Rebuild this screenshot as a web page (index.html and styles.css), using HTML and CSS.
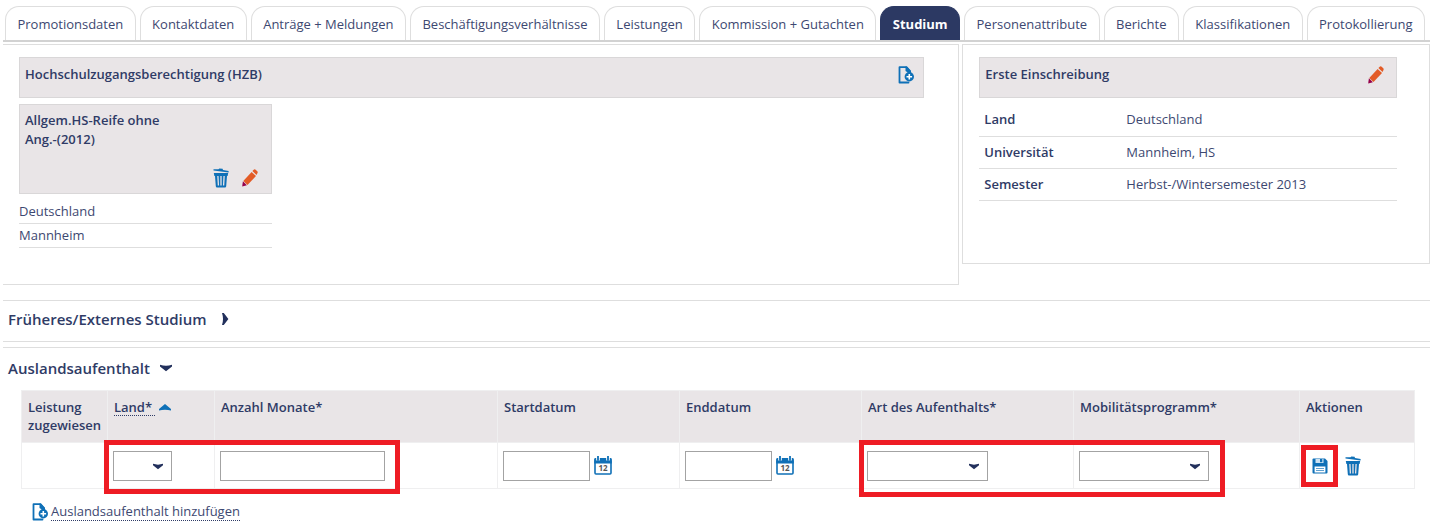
FILE: index.html
```html
<!DOCTYPE html>
<html lang="de">
<head>
  <meta charset="UTF-8" />
  <title>Studium - Promotionsdaten</title>
  <link rel="stylesheet" href="styles.css">
</head>
<body>
  <svg class="sprite" aria-hidden="true">
    <symbol id="i-add" viewBox="0 0 16 18">
      <path d="M12 5.500 8.500 1.200H1.500V16.500H10.500" fill="none" stroke="#0f70b7" stroke-width="1.800" stroke-linejoin="round" stroke-linecap="round"/>
      <path d="M7.500 .5H9l4 4.300V7h-2.500L7.500 5z" fill="#0f70b7"/>
      <circle cx="11.300" cy="10.800" r="4.700" fill="#0f70b7"/>
      <path d="M11.300 8v5.600M8.500 10.800h5.600" stroke="#fff" stroke-width="1.600"/>
    </symbol>
    <symbol id="i-trash" viewBox="0 0 16 20">
      <path d="M.5 1.200 5.500 1.300 6.300.4 9.600.8 10 1.900 15.600 3.100V4.500L.5 2.600z" fill="#0f70b7"/>
      <path d="M.8 5H15.200L14.600 8H14L13.200 18.200Q13.100 19.500 12 19.500H4Q2.900 19.500 2.800 18.200L2 8H1.400z" fill="#0f70b7"/>
      <path d="M4.900 8l.5 9.500M8 8v9.500M11.100 8l-.5 9.500" stroke="#e9e5e7" stroke-width="1.300"/>
    </symbol>
    <symbol id="i-edit" viewBox="0 0 16 18">
      <path d="M1.300 12 9.600 2.900 14 7 5.500 16z" fill="#e35b26"/>
      <path d="M10.400 2 12 .6Q12.800 0 13.700.8L15.500 2.600Q16 3.300 15.400 4.200L14.500 5.900z" fill="#e35b26"/>
      <path d="M.9 12.300 4.900 16.300.2 17.400z" fill="#96004b"/>
    </symbol>
    <symbol id="i-save" viewBox="0 0 16 16">
      <path d="M1.500.5H13L15.500 3V14.500Q15.500 15.500 14.500 15.500H1.500Q.5 15.500.5 14.500V1.500Q.5.5 1.500.5z" fill="#0f70b7"/>
      <path d="M3.500 1H11.500V5H3.500z" fill="#cfe3f2"/>
      <path d="M8 1h2.300v3.200H8z" fill="#0f70b7"/>
      <path d="M2.600 8.500H13.400V14.500H2.600z" fill="#fff"/>
      <path d="M4 10.500H12M4 12.500H12" stroke="#5fa0d0" stroke-width="1"/>
    </symbol>
    <symbol id="i-calendar" viewBox="0 0 18 19">
      <rect x="1" y="4" width="16" height="14" rx="1" fill="#fff" stroke="#0f70b7" stroke-width="1.600"/>
      <path d="M.2 3.200Q.2 2 1.500 2H16.500Q17.800 2 17.800 3.200V7.500H.2z" fill="#0f70b7"/>
      <path d="M4 .3V4.500M14 .3V4.500" stroke="#fff" stroke-width="3.600"/>
      <path d="M4 .3V4M14 .3V4" stroke="#0f70b7" stroke-width="1.800" stroke-linecap="round"/>
    </symbol>
    <symbol id="i-down" viewBox="0 0 12 8">
      <path d="M0 .8Q6 2.800 12 .8V2.600L6 7.200 0 2.600z" fill="#22305c"/>
    </symbol>
  </svg>

  <nav class="tabs">
    <a href="#">Promotionsdaten</a>
    <a href="#">Kontaktdaten</a>
    <a href="#">Anträge + Meldungen</a>
    <a href="#">Beschäftigungsverhältnisse</a>
    <a href="#">Leistungen</a>
    <a href="#">Kommission + Gutachten</a>
    <a href="#" class="active">Studium</a>
    <a href="#">Personenattribute</a>
    <a href="#">Berichte</a>
    <a href="#">Klassifikationen</a>
    <a href="#">Protokollierung</a>
  </nav>

  <div class="panels">
    <section class="panel hzb">
      <div class="box bar">
        <h2>Hochschulzugangsberechtigung (HZB)</h2>
        <button class="icon" aria-label="HZB hinzufügen"><svg width="16" height="18"><use href="#i-add"/></svg></button>
      </div>
      <div class="entry">
        <div class="box card">
          <h2>Allgem.HS-Reife ohne Ang.-(2012)</h2>
          <div class="card-actions">
            <button class="icon" aria-label="Löschen"><svg width="16" height="20"><use href="#i-trash"/></svg></button>
            <button class="icon" aria-label="Bearbeiten"><svg width="16" height="18"><use href="#i-edit"/></svg></button>
          </div>
        </div>
        <p>Deutschland</p>
        <p>Mannheim</p>
      </div>
    </section>

    <section class="panel first">
      <div class="box bar">
        <h2>Erste Einschreibung</h2>
        <button class="icon" aria-label="Bearbeiten"><svg width="16" height="18"><use href="#i-edit"/></svg></button>
      </div>
      <table class="facts">
        <tr><th scope="row">Land</th><td>Deutschland</td></tr>
        <tr><th scope="row">Universität</th><td>Mannheim, HS</td></tr>
        <tr><th scope="row">Semester</th><td>Herbst-/Wintersemester 2013</td></tr>
      </table>
    </section>
  </div>

  <section class="fold closed">
    <button class="fold-title">Früheres/Externes Studium
      <svg width="8" height="12" viewBox="0 0 8 12"><path d="M1 0Q3 6 1 12H2.800L7.400 6 2.800 0z" fill="#22305c"/></svg>
    </button>
  </section>

  <section class="fold">
    <button class="fold-title open">Auslandsaufenthalt
      <svg width="12" height="8"><use href="#i-down"/></svg>
    </button>

    <table class="stays">
      <colgroup>
        <col class="c-leistung"><col class="c-land"><col><col class="c-datum"><col class="c-datum">
        <col class="c-art"><col class="c-programm"><col class="c-aktionen">
      </colgroup>
      <thead>
        <tr>
          <th>Leistung zugewiesen</th>
          <th><a href="#" class="dotted" id="l-land">Land*&nbsp;</a>
            <svg width="12" height="7" viewBox="0 0 12 7"><path d="M0 6.500V5L6 0 12 5V6.500Q6 5 0 6.500z" fill="#0f70b7"/></svg></th>
          <th id="l-monate">Anzahl Monate*</th>
          <th id="l-start">Startdatum</th>
          <th id="l-ende">Enddatum</th>
          <th id="l-art">Art des Aufenthalts*</th>
          <th id="l-programm">Mobilitätsprogramm*</th>
          <th>Aktionen</th>
        </tr>
      </thead>
      <tbody>
        <tr>
          <td></td>
          <td>
            <span class="select s-land"><select aria-labelledby="l-land"></select><svg width="10" height="7"><use href="#i-down"/></svg></span>
            <span class="mark mark-land"></span>
          </td>
          <td><input type="text" class="monate" aria-labelledby="l-monate"></td>
          <td>
            <div class="date">
              <input type="text" aria-labelledby="l-start">
              <button class="icon" aria-label="Startdatum wählen"><svg width="18" height="19"><use href="#i-calendar"/><text x="9" y="15" text-anchor="middle" class="cal-day">12</text></svg></button>
            </div>
          </td>
          <td>
            <div class="date">
              <input type="text" aria-labelledby="l-ende">
              <button class="icon" aria-label="Enddatum wählen"><svg width="18" height="19"><use href="#i-calendar"/><text x="9" y="15" text-anchor="middle" class="cal-day">12</text></svg></button>
            </div>
          </td>
          <td>
            <span class="select s-art"><select aria-labelledby="l-art"></select><svg width="10" height="7"><use href="#i-down"/></svg></span>
            <span class="mark mark-art"></span>
          </td>
          <td>
            <span class="select s-programm"><select aria-labelledby="l-programm"></select><svg width="10" height="7"><use href="#i-down"/></svg></span>
          </td>
          <td>
            <div class="actions">
              <button class="icon" aria-label="Speichern"><svg width="16" height="16"><use href="#i-save"/></svg></button>
              <button class="icon" aria-label="Löschen"><svg width="16" height="20"><use href="#i-trash"/></svg></button>
            </div>
            <span class="mark mark-save"></span>
          </td>
        </tr>
      </tbody>
    </table>

    <div class="add">
      <svg width="16" height="18"><use href="#i-add"/></svg>
      <a href="#" class="dotted">Auslandsaufenthalt hinzufügen</a>
    </div>
  </section>
</body>
</html>
```
FILE: styles.css
```css
* {
  box-sizing: border-box;
}

body {
  margin: 0;
  padding: 6px 10px 0 3px;
  background: #fff;
  font-family: "Open Sans", "Noto Sans", sans-serif;
  font-size: 13px;
  line-height: 19px;
  color: #3d4871;
}

h2, p {
  margin: 0;
}

h2 {
  font-size: 13px;
  font-weight: 600;
  color: #2f3b66;
}

svg {
  display: block;
}

.sprite {
  position: absolute;
  width: 0;
  height: 0;
}

.cal-day {
  font-size: 8px;
  font-weight: 700;
  fill: #555;
}

.icon {
  padding: 0;
  border: 0;
  background: none;
  font-family: inherit;
  cursor: pointer;
}

/* tabs */
.tabs {
  display: flex;
  gap: 4px;
  padding: 0 5px 0 2px;
  border-bottom: 2px solid #d2d2d2;
}

.tabs a {
  flex: 1 1 auto;
  height: 34px;
  padding: 8px 8px 0;
  border: 1px solid #dedede;
  border-bottom: 0;
  border-radius: 14px 14px 0 0;
  color: #3d4871;
  text-align: center;
  text-decoration: none;
  white-space: nowrap;
}

.tabs .active {
  background: #2c3963;
  border-color: #2c3963;
  color: #fff;
  font-weight: 700;
}

/* panels */
.panels {
  display: grid;
  grid-template-columns: 957fr 468fr;
  align-items: start;
  gap: 3px;
  margin-top: 2px;
}

.panel {
  border: 1px solid #dedede;
}

.hzb {
  padding: 12px 34px 36px 16px;
  border-left: 0;
}

.first {
  padding: 12px 32px 62px 16px;
}

.box {
  display: flex;
  justify-content: space-between;
  border: 1px solid #d9d7d8;
  background: #e9e5e7;
}

.bar {
  align-items: flex-start;
  height: 41px;
  padding: 7px 9px 0 5px;
}

.bar .icon {
  margin-top: 1px;
}

.first .bar {
  padding-right: 12px;
}

.entry {
  width: 253px;
  margin-top: 6px;
}

.card {
  flex-direction: column;
  height: 90px;
  padding: 6px 13px 5px 5px;
  margin-bottom: 6px;
}

.card h2 {
  width: 160px;
}

.card-actions {
  display: flex;
  justify-content: flex-end;
  align-items: center;
  gap: 13px;
}

.entry p {
  height: 24px;
  padding-top: 2px;
  border-bottom: 1px solid #dedede;
}

.facts {
  width: 100%;
  margin-top: 6px;
  border-collapse: collapse;
}

.facts tr {
  height: 32px;
  border-bottom: 1px solid #dedede;
}

.facts th {
  width: 142px;
  padding: 0 5px;
  text-align: left;
  font-weight: 600;
  color: #2f3b66;
}

.facts td {
  padding: 0 5px;
}

/* collapsible sections */
.fold {
  border-top: 1px solid #dedede;
}

.closed {
  height: 42px;
  margin: 15px 0 5px;
  border-bottom: 1px solid #dedede;
}

.fold-title {
  display: flex;
  align-items: center;
  gap: 14px;
  height: 36px;
  padding: 0 5px;
  border: 0;
  background: none;
  font: 600 15px/22px "Open Sans", "Noto Sans", sans-serif;
  color: #2f3b66;
}

.open {
  gap: 10px;
  height: 40px;
}

.stays {
  width: calc(100% - 33px);
  margin: 2px 0 0 18px;
  table-layout: fixed;
  border-collapse: collapse;
}

.c-leistung { width: 86px; }
.c-land { width: 107px; }
.c-datum { width: 182px; }
.c-art { width: 212px; }
.c-programm { width: 226px; }
.c-aktionen { width: 115px; }

.stays th,
.stays td {
  position: relative;
  border: 1px solid #efeff0;
  text-align: left;
}

.stays th {
  height: 52px;
  padding: 7px 0 0 6px;
  background: #e9e5e7;
  font-weight: 600;
  line-height: 18px;
  color: #2f3b66;
  vertical-align: top;
}

.stays th svg {
  display: inline-block;
  vertical-align: 1px;
}

.stays td {
  height: 46px;
  padding: 0 0 0 5px;
}

.dotted {
  color: inherit;
  text-decoration: none;
  border-bottom: 1px dotted #2f3b66;
}

.stays th .dotted {
  display: inline-block;
  line-height: 16px;
}

.stays input,
.stays select {
  display: block;
  height: 30px;
  border: 1px solid #a3a3a3;
  border-radius: 0;
  background: #fff;
  font: 13px "Open Sans", "Noto Sans", sans-serif;
  color: #3d4871;
}

.monate {
  width: 165px;
}

.date {
  display: flex;
  align-items: center;
  gap: 4px;
}

.date input {
  width: 87px;
}

.select {
  display: block;
  position: relative;
}

.select select {
  width: 100%;
  appearance: none;
}

.select svg {
  position: absolute;
  right: 9px;
  top: 12px;
  pointer-events: none;
}

.s-land { width: 59px; }
.s-art { width: 121px; }
.s-programm { width: 130px; }

.actions {
  display: flex;
  align-items: center;
  gap: 17px;
  padding-left: 7px;
}

/* red highlight frames */
.mark {
  position: absolute;
  z-index: 1;
  border: 5px solid #ee1c24;
  pointer-events: none;
}

.mark-land {
  left: -4px;
  top: -3px;
  width: 296px;
  height: 54px;
}

.mark-art {
  left: -3px;
  top: -3px;
  width: 366px;
  height: 57px;
}

.mark-save {
  left: 1px;
  top: 2px;
  width: 37px;
  height: 42px;
}

.add {
  display: flex;
  align-items: center;
  gap: 3px;
  padding: 14px 0 0 29px;
}

.add .dotted {
  line-height: 17px;
}
```
